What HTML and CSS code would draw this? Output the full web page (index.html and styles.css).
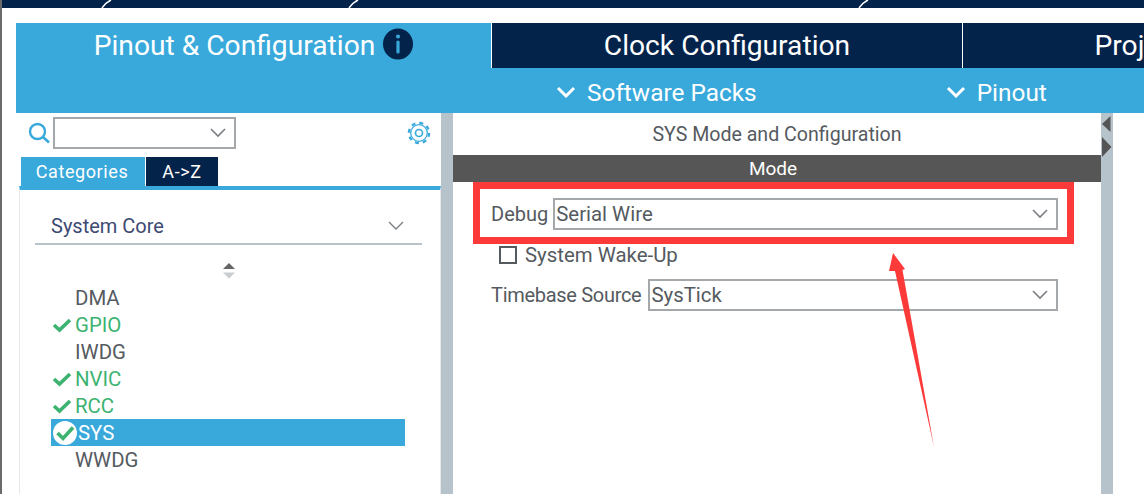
FILE: index.html
```html
<!DOCTYPE html>
<html>
<head>
	<meta charset="utf-8">
	<meta name="viewport" content="width=device-width, initial-scale=1">
	<title>Pinout &amp; Configuration</title>

	<link rel="stylesheet" href="styles.css">
</head>
<body>

	<!-- top strip, cut off by the screenshot -->
	<svg class="top-strip" width="1142" height="8" viewBox="0 0 1142 8">
		<rect width="1142" height="8" fill="#03234b"/>
		<path d="M100 8 Q103 3 109 0 M347 8 Q350 3 356 0 M857 8 Q860 3 866 0" fill="none" stroke="#fff" stroke-width="1.5"/>
	</svg>

	<div class="app">
		<div class="tabs">
			<div class="tab tab-active">
				<span>Pinout &amp; Configuration</span>
				<svg class="info-icon" width="30" height="32" viewBox="0 0 30 32">
					<ellipse cx="15" cy="16" rx="15" ry="15.500" fill="#03234b"/>
					<circle cx="15" cy="8.500" r="2" fill="#39a9dc"/>
					<rect x="13.400" y="12.500" width="3.200" height="13" rx="1.500" fill="#39a9dc"/>
				</svg>
			</div>
			<div class="tab">Clock Configuration</div>
			<div class="tab">Project Manager</div>
		</div>

		<div class="subbar">
			<div class="sub-item">
				<svg width="20" height="12" viewBox="0 0 20 12"><path d="M2 2 L10 10 L18 2" fill="none" stroke="#fff" stroke-width="3"/></svg>
				Software Packs
			</div>
			<div class="sub-item">
				<svg width="20" height="12" viewBox="0 0 20 12"><path d="M2 2 L10 10 L18 2" fill="none" stroke="#fff" stroke-width="3"/></svg>
				Pinout
			</div>
		</div>

		<div class="panels">
			<div class="left">
				<div class="search-row">
					<svg class="search-icon" width="22" height="22" viewBox="0 0 22 22">
						<circle cx="9.500" cy="9.500" r="7.500" fill="none" stroke="#39a9dc" stroke-width="2.400"/>
						<path d="M15 15 L21 20.500" stroke="#39a9dc" stroke-width="2.600"/>
					</svg>
					<div class="select select-search">
						<svg class="chev" width="16" height="10" viewBox="0 0 16 10"><path d="M1 1 L8 8 L15 1" fill="none" stroke="#7b7f83" stroke-width="1.600"/></svg>
					</div>
					<svg class="gear" width="24" height="26" viewBox="0 0 26 26">
						<circle cx="13" cy="13" r="11" fill="none" stroke="#39a9dc" stroke-width="2.400" stroke-dasharray="4.300 4.339"/>
						<circle cx="13" cy="13" r="9" fill="none" stroke="#39a9dc" stroke-width="1.400"/>
						<circle cx="13" cy="13" r="3.800" fill="none" stroke="#39a9dc" stroke-width="1.800"/>
					</svg>
				</div>

				<div class="view-tabs">
					<div class="view-tab view-tab-active">Categories</div>
					<div class="view-tab">A-&gt;Z</div>
				</div>

				<div class="card">
					<div class="cat-head">
						System Core
						<svg width="16" height="10" viewBox="0 0 16 10"><path d="M1 1 L8 8 L15 1" fill="none" stroke="#7b7f83" stroke-width="1.400"/></svg>
					</div>
					<div class="sort">
						<svg width="12" height="16" viewBox="0 0 12 16">
							<path d="M6 0 L12 6 H0 Z" fill="#666"/>
							<path d="M0 9.500 H12 L6 15.500 Z" fill="#c9cdd0"/>
						</svg>
					</div>
					<div class="list">
						<div class="row">DMA</div>
						<div class="row row-ok">
							<svg class="check" width="20" height="16" viewBox="0 0 20 16"><path d="M2 8 L7.500 13 L18 3" fill="none" stroke="#3cb371" stroke-width="3.600"/></svg>
							GPIO
						</div>
						<div class="row">IWDG</div>
						<div class="row row-ok">
							<svg class="check" width="20" height="16" viewBox="0 0 20 16"><path d="M2 8 L7.500 13 L18 3" fill="none" stroke="#3cb371" stroke-width="3.600"/></svg>
							NVIC
						</div>
						<div class="row row-ok">
							<svg class="check" width="20" height="16" viewBox="0 0 20 16"><path d="M2 8 L7.500 13 L18 3" fill="none" stroke="#3cb371" stroke-width="3.600"/></svg>
							RCC
						</div>
						<div class="row row-selected">
							<svg class="check-round" width="26" height="26" viewBox="0 0 26 26">
								<circle cx="13" cy="13" r="12" fill="#fff"/>
								<path d="M5.500 13 L11 18.500 L21 7.500" fill="none" stroke="#3cb371" stroke-width="3.600"/>
							</svg>
							SYS
						</div>
						<div class="row">WWDG</div>
					</div>
				</div>
			</div>

			<div class="gutter"></div>

			<div class="right">
				<div class="right-title">SYS Mode and Configuration</div>
				<div class="mode-bar">Mode</div>
				<div class="mode-body">
					<div class="field">
						<label>Debug</label>
						<div class="select">Serial Wire
							<svg class="chev" width="16" height="10" viewBox="0 0 16 10"><path d="M1 1 L8 8 L15 1" fill="none" stroke="#7b7f83" stroke-width="1.600"/></svg>
						</div>
					</div>
					<div class="check-field">
						<span class="box"></span>
						System Wake-Up
					</div>
					<div class="field">
						<label class="label-long">Timebase Source</label>
						<div class="select">SysTick
							<svg class="chev" width="16" height="10" viewBox="0 0 16 10"><path d="M1 1 L8 8 L15 1" fill="none" stroke="#7b7f83" stroke-width="1.600"/></svg>
						</div>
					</div>
				</div>
			</div>

			<div class="gutter gutter-arrows">
				<svg width="12" height="46" viewBox="0 0 12 46">
					<path d="M9.500 3 L1 11 L9.500 19 Z" fill="#555"/>
					<path d="M1 24 L10.500 34 L1 44 Z" fill="#555"/>
				</svg>
			</div>
		</div>
	</div>

	<!-- red markup drawn over the screenshot -->
	<div class="mark-box"></div>
	<svg class="mark-arrow" width="60" height="200" viewBox="0 0 60 200">
		<path d="M13 3 L25 19 L22.500 20 L54 197 L15 21 L9 21 Z" fill="#fc3a3a"/>
	</svg>

</body>
</html>
```

FILE: styles.css
```css
html, body {
	margin: 0;
	height: 100%;
	overflow: hidden;
}

body {
	position: relative;
	background: #fff;
	border-left: 2px solid #6b6b6b;
	font-family: Roboto, "Liberation Sans", sans-serif;
	color: #555a60;
}

.top-strip {
	display: block;
}

.app {
	margin: 15px 0 0 14px;
}

/* main tabs */
.tabs {
	display: flex;
	height: 45px;
	overflow: hidden;
	background: #fff;
}

.tab {
	flex: 0 0 470px;
	margin-right: 1px;
	display: flex;
	align-items: center;
	justify-content: center;
	background: #03234b;
	color: #fff;
	font-size: 28.200px;
	white-space: nowrap;
}

.tab-active {
	flex-basis: 475px;
	background: #39a9dc;
	gap: 8px;
}

.info-icon {
	margin-top: -3px;
}

.subbar {
	display: flex;
	gap: 189px;
	height: 45px;
	box-sizing: border-box;
	padding: 3px 0 0 540px;
	background: #39a9dc;
	color: #fff;
	font-size: 24.400px;
}

.sub-item {
	display: flex;
	align-items: center;
	gap: 11px;
	white-space: nowrap;
}

.panels {
	display: flex;
	height: 381px;
}

/* left panel */
.left {
	width: 425px;
	flex: none;
}

.search-row {
	display: flex;
	align-items: center;
	height: 40px;
	margin-bottom: 4px;
	padding-left: 12px;
}

.search-icon {
	flex: none;
	margin-right: 3px;
}

.select {
	position: relative;
	flex: 1;
	box-sizing: border-box;
	height: 32px;
	line-height: 29px;
	padding-left: 1px;
	border: 2px solid #a5a8ab;
	font-size: 20.400px;
	color: #555a60;
}

.select-search {
	flex: 0 0 183px;
	margin-right: 171px;
}

.chev {
	position: absolute;
	right: 8px;
	top: 9px;
}

.view-tabs {
	display: flex;
	gap: 1px;
	height: 29px;
	margin-left: 5px;
}

.view-tab {
	width: 72px;
	display: flex;
	align-items: center;
	justify-content: center;
	background: #03234b;
	color: #fff;
	font-size: 18px;
	letter-spacing: 0.6px;
}

.view-tab-active {
	width: 124px;
	padding-right: 2px;
	box-sizing: border-box;
	background: #39a9dc;
}

.card {
	height: 304px;
	margin-left: 3px;
	border-top: 4px solid #39a9dc;
	border-left: 1px solid #e6e8ea;
	border-right: 1px solid #e6e8ea;
}

.cat-head {
	display: flex;
	align-items: center;
	justify-content: space-between;
	box-sizing: border-box;
	height: 33px;
	margin: 22px 18px 0 15px;
	padding: 0 18px 3px 16px;
	border-bottom: 2px solid #b9c4ca;
	font-size: 20px;
	color: #3d4a72;
}

.sort {
	display: flex;
	justify-content: center;
	height: 39px;
	padding: 18px 3px 0 0;
	box-sizing: border-box;
}

.list {
	margin: 0 35px 0 31px;
}

.row {
	display: flex;
	align-items: center;
	height: 27px;
	padding-left: 24px;
	font-size: 20.400px;
	color: #555a60;
}

.row-ok {
	padding-left: 1px;
	color: #3cb371;
}

.check {
	flex: none;
	margin-right: 3px;
}

.row-selected {
	padding-left: 1px;
	background: #39a9dc;
	color: #fff;
}

.check-round {
	flex: none;
}

/* splitters */
.gutter {
	width: 12px;
	flex: none;
	background: #b7c3ca;
}

/* right panel */
.right {
	width: 648px;
	flex: none;
}

.right-title {
	height: 42px;
	line-height: 44px;
	text-align: center;
	font-size: 19.600px;
}

.mode-bar {
	height: 27px;
	line-height: 27px;
	padding-right: 8px;
	background: #555655;
	color: #fff;
	text-align: center;
	font-size: 19px;
}

.mode-body {
	padding: 16px 43px 0 38px;
}

.field {
	display: flex;
	align-items: center;
	gap: 5px;
	height: 32px;
	font-size: 20px;
}

.label-long {
	margin-right: 2px;
	letter-spacing: -0.3px;
}

.check-field {
	display: flex;
	align-items: center;
	gap: 8px;
	height: 49px;
	padding-left: 8px;
	font-size: 20.400px;
}

.box {
	width: 14px;
	height: 14px;
	border: 2px solid #555a60;
}

/* overlays */
.mark-box {
	position: absolute;
	left: 471px;
	top: 182px;
	box-sizing: border-box;
	width: 601px;
	height: 62px;
	border: 7px solid #fc3a3a;
}

.mark-arrow {
	position: absolute;
	left: 878px;
	top: 250px;
}
```
